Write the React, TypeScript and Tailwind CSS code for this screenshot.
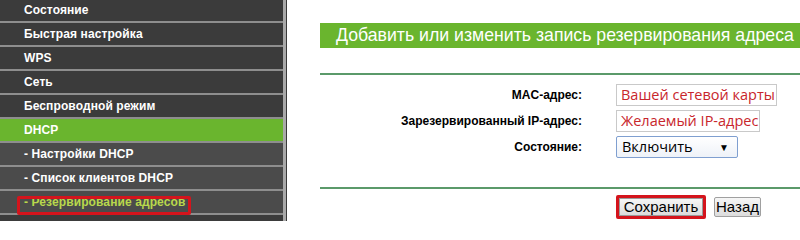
import React from "react";

const menu: { label: string; kind: "top" | "active" | "sub" | "subsel" }[] = [
  { label: "Состояние", kind: "top" },
  { label: "Быстрая настройка", kind: "top" },
  { label: "WPS", kind: "top" },
  { label: "Сеть", kind: "top" },
  { label: "Беспроводной режим", kind: "top" },
  { label: "DHCP", kind: "active" },
  { label: "- Настройки DHCP", kind: "sub" },
  { label: "- Список клиентов DHCP", kind: "sub" },
  { label: "- Резервирование адресов", kind: "subsel" },
  { label: "", kind: "top" },
];

export default function App() {
  return (
    <div
      className="flex w-[800px] h-[221px] overflow-hidden bg-white"
      style={{ fontFamily: '"Liberation Sans", Arial, sans-serif' }}
    >
      {/* Sidebar */}
      <div className="w-[283px] shrink-0 flex flex-col -mt-[1px] bg-[#3b3b3b]">
        {menu.map((m, i) => (
          <div
            key={i}
            className={
              "relative h-[24px] shrink-0 flex items-center pl-[24px] border-b-2 border-[#8e8e8e] text-[12px] font-bold tracking-[0.1px] whitespace-nowrap " +
              (m.kind === "active"
                ? "bg-[#6ab52e] text-white"
                : m.kind === "top"
                ? "bg-[#3b3b3b] text-white"
                : m.kind === "sub"
                ? "bg-[#4b4b4b] text-white"
                : "bg-[#4b4b4b] text-[#b9d84c]")
            }
          >
            {m.label}
            {m.kind === "subsel" && (
              <div className="absolute left-[17px] top-[5px] w-[174px] h-[19px] border-[3px] border-[#d4141c] rounded-[2px]" />
            )}
          </div>
        ))}
      </div>
      <div className="w-[3px] shrink-0 bg-[#a9a9a9]" />
      <div className="w-[1px] shrink-0 bg-[#3a3a3a]" />

      {/* Main */}
      <div className="flex-1 pl-[33px] flex flex-col">
        <div className="mt-[23px] h-[25px] bg-[#6ab52e] flex items-center pl-[16px] text-white text-[17.7px] whitespace-nowrap overflow-hidden">
          Добавить или изменить запись резервирования адреса
        </div>
        <div className="mt-[25px] h-[2px] bg-[#5b9a6a]" />

        <div className="mt-[9px] flex flex-col gap-[4px]">
          <div className="flex items-center h-[22px]">
            <div className="w-[262px] text-right text-[12px] font-bold text-black">MAC-адрес:</div>
            <div className="ml-[34px] w-[161px] h-[22px] border border-[#c9c9c9] flex items-center pl-[4px] text-[14.5px] text-[#c8262c] whitespace-nowrap" style={{ fontFamily: '"Open Sans", sans-serif' }}>
              Вашей сетевой карты
            </div>
          </div>
          <div className="flex items-center h-[22px]">
            <div className="w-[262px] text-right text-[12px] font-bold text-black">Зарезервированный IP-адрес:</div>
            <div className="ml-[34px] w-[144px] h-[22px] border border-[#c9c9c9] flex items-center pl-[4px] text-[14.5px] text-[#c8262c] whitespace-nowrap" style={{ fontFamily: '"Open Sans", sans-serif' }}>
              Желаемый IP-адрес
            </div>
          </div>
          <div className="flex items-center h-[22px]">
            <div className="w-[262px] text-right text-[12px] font-bold text-black">Состояние:</div>
            <div className="ml-[34px] w-[122px] h-[22px] border border-[#7f9fd0] rounded-[2px] bg-gradient-to-b from-white to-[#eef2f8] flex items-center justify-between pl-[5px] pr-[8px] text-[14.5px] text-black" style={{ fontFamily: '"Open Sans", sans-serif' }}>
              <span>Включить</span>
              <span className="text-[10px]">▼</span>
            </div>
          </div>
        </div>

        <div className="mt-[29px] h-[2px] bg-[#5b9a6a]" />

        <div className="mt-[6px] flex items-center pl-[296px] gap-[8px]">
          <div className="w-[90px] h-[24px] border-[3px] border-[#d4141c] rounded-[2px] flex">
            <div className="flex-1 bg-gradient-to-b from-[#f6f6f6] to-[#dcdcdc] border border-[#9a9a9a] flex items-center justify-center text-[15px] text-black">
              Сохранить
            </div>
          </div>
          <div className="w-[47px] h-[20px] bg-gradient-to-b from-[#f6f6f6] to-[#dcdcdc] border border-[#a0a0a0] rounded-[2px] flex items-center justify-center text-[15px] text-black">
            Назад
          </div>
        </div>
      </div>
    </div>
  );
}
